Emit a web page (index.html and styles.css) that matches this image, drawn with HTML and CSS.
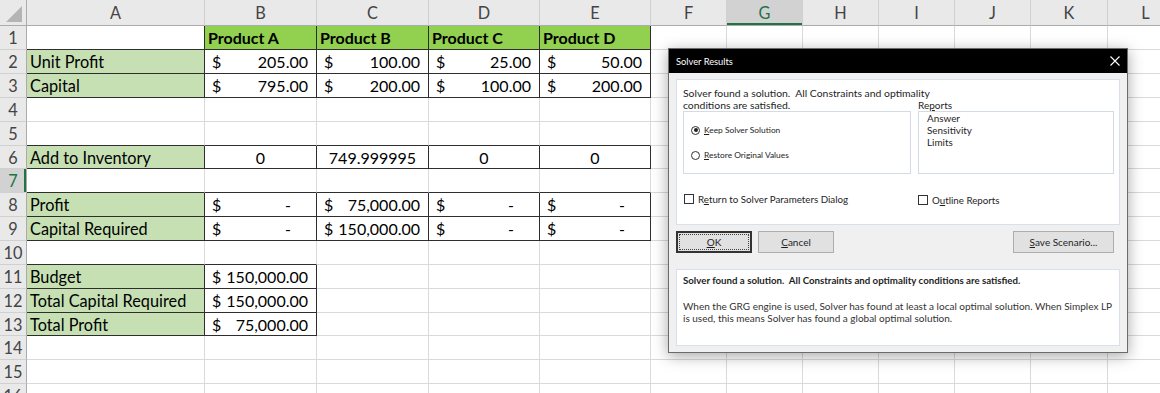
FILE: index.html
```html
<!DOCTYPE html>
<html lang="en">
<head>
    <meta charset="UTF-8">
    <title>Solver Results</title>
    <link rel="stylesheet" href="styles.css">
</head>
<body>
    <!-- Worksheet -->
    <div class="sheet">
        <div class="c hd corner">
            <svg width="26" height="25" viewBox="0 0 26 25"><polygon points="22,6 22,22 6,22" fill="#b4b4b4"/></svg>
        </div>
        <div class="c hd">A</div><div class="c hd">B</div><div class="c hd">C</div><div class="c hd">D</div><div class="c hd">E</div><div class="c hd">F</div><div class="c hd sel-col">G</div><div class="c hd">H</div><div class="c hd">I</div><div class="c hd">J</div><div class="c hd">K</div><div class="c hd">L</div>

        <!-- row 1 -->
        <div class="c rh">1</div>
        <div class="c bx"></div>
        <div class="c prod bx">Product A</div>
        <div class="c prod bx">Product B</div>
        <div class="c prod bx">Product C</div>
        <div class="c prod bx">Product D</div>
        <div class="c"></div><div class="c"></div><div class="c"></div><div class="c"></div><div class="c"></div><div class="c"></div><div class="c"></div>

        <!-- row 2 -->
        <div class="c rh">2</div>
        <div class="c lab bx">Unit Profit</div>
        <div class="c bx acct"><span>$</span><span>205.00</span></div>
        <div class="c bx acct"><span>$</span><span>100.00</span></div>
        <div class="c bx acct"><span>$</span><span>25.00</span></div>
        <div class="c bx acct"><span>$</span><span>50.00</span></div>
        <div class="c"></div><div class="c"></div><div class="c"></div><div class="c"></div><div class="c"></div><div class="c"></div><div class="c"></div>

        <!-- row 3 -->
        <div class="c rh">3</div>
        <div class="c lab bx">Capital</div>
        <div class="c bx acct"><span>$</span><span>795.00</span></div>
        <div class="c bx acct"><span>$</span><span>200.00</span></div>
        <div class="c bx acct"><span>$</span><span>100.00</span></div>
        <div class="c bx acct"><span>$</span><span>200.00</span></div>
        <div class="c"></div><div class="c"></div><div class="c"></div><div class="c"></div><div class="c"></div><div class="c"></div><div class="c"></div>

        <!-- row 4 -->
        <div class="c rh">4</div>
        <div class="c"></div><div class="c"></div><div class="c"></div><div class="c"></div><div class="c"></div>
        <div class="c"></div><div class="c"></div><div class="c"></div><div class="c"></div><div class="c"></div><div class="c"></div><div class="c"></div>

        <!-- row 5 -->
        <div class="c rh">5</div>
        <div class="c bt"></div><div class="c bt"></div><div class="c bt"></div><div class="c bt"></div><div class="c bt"></div>
        <div class="c"></div><div class="c"></div><div class="c"></div><div class="c"></div><div class="c"></div><div class="c"></div><div class="c"></div>

        <!-- row 6 -->
        <div class="c rh">6</div>
        <div class="c lab bx">Add to Inventory</div>
        <div class="c bx ctr">0</div>
        <div class="c bx ctr">749.999995</div>
        <div class="c bx ctr">0</div>
        <div class="c bx ctr">0</div>
        <div class="c"></div><div class="c"></div><div class="c"></div><div class="c"></div><div class="c"></div><div class="c"></div><div class="c"></div>

        <!-- row 7 -->
        <div class="c rh sel-row">7</div>
        <div class="c bt"></div><div class="c bt"></div><div class="c bt"></div><div class="c bt"></div><div class="c bt"></div>
        <div class="c"></div><div class="c"></div><div class="c"></div><div class="c"></div><div class="c"></div><div class="c"></div><div class="c"></div>

        <!-- row 8 -->
        <div class="c rh">8</div>
        <div class="c lab bx">Profit</div>
        <div class="c bx acct"><span>$</span><span class="dash">-</span></div>
        <div class="c bx acct"><span>$</span><span>75,000.00</span></div>
        <div class="c bx acct"><span>$</span><span class="dash">-</span></div>
        <div class="c bx acct"><span>$</span><span class="dash">-</span></div>
        <div class="c"></div><div class="c"></div><div class="c"></div><div class="c"></div><div class="c"></div><div class="c"></div><div class="c"></div>

        <!-- row 9 -->
        <div class="c rh">9</div>
        <div class="c lab bx">Capital Required</div>
        <div class="c bx acct"><span>$</span><span class="dash">-</span></div>
        <div class="c bx acct"><span>$</span><span>150,000.00</span></div>
        <div class="c bx acct"><span>$</span><span class="dash">-</span></div>
        <div class="c bx acct"><span>$</span><span class="dash">-</span></div>
        <div class="c"></div><div class="c"></div><div class="c"></div><div class="c"></div><div class="c"></div><div class="c"></div><div class="c"></div>

        <!-- row 10 -->
        <div class="c rh">10</div>
        <div class="c bt"></div><div class="c bt"></div><div class="c"></div><div class="c"></div><div class="c"></div>
        <div class="c"></div><div class="c"></div><div class="c"></div><div class="c"></div><div class="c"></div><div class="c"></div><div class="c"></div>

        <!-- row 11 -->
        <div class="c rh">11</div>
        <div class="c lab bx">Budget</div>
        <div class="c bx acct"><span>$</span><span>150,000.00</span></div>
        <div class="c"></div><div class="c"></div><div class="c"></div>
        <div class="c"></div><div class="c"></div><div class="c"></div><div class="c"></div><div class="c"></div><div class="c"></div><div class="c"></div>

        <!-- row 12 -->
        <div class="c rh">12</div>
        <div class="c lab bx">Total Capital Required</div>
        <div class="c bx acct"><span>$</span><span>150,000.00</span></div>
        <div class="c"></div><div class="c"></div><div class="c"></div>
        <div class="c"></div><div class="c"></div><div class="c"></div><div class="c"></div><div class="c"></div><div class="c"></div><div class="c"></div>

        <!-- row 13 -->
        <div class="c rh">13</div>
        <div class="c lab bx">Total Profit</div>
        <div class="c bx acct"><span>$</span><span>75,000.00</span></div>
        <div class="c"></div><div class="c"></div><div class="c"></div>
        <div class="c"></div><div class="c"></div><div class="c"></div><div class="c"></div><div class="c"></div><div class="c"></div><div class="c"></div>

        <!-- rows 14 - 16 -->
        <div class="c rh">14</div>
        <div class="c"></div><div class="c"></div><div class="c"></div><div class="c"></div><div class="c"></div>
        <div class="c"></div><div class="c"></div><div class="c"></div><div class="c"></div><div class="c"></div><div class="c"></div><div class="c"></div>

        <div class="c rh">15</div>
        <div class="c"></div><div class="c"></div><div class="c"></div><div class="c"></div><div class="c"></div>
        <div class="c"></div><div class="c"></div><div class="c"></div><div class="c"></div><div class="c"></div><div class="c"></div><div class="c"></div>

        <div class="c rh">16</div>
        <div class="c"></div><div class="c"></div><div class="c"></div><div class="c"></div><div class="c"></div>
        <div class="c"></div><div class="c"></div><div class="c"></div><div class="c"></div><div class="c"></div><div class="c"></div><div class="c"></div>
    </div>

    <!-- Solver Results dialog -->
    <div class="dialog">
        <div class="dialog-title">
            <span>Solver Results</span>
            <svg class="close" width="10" height="10" viewBox="0 0 10 10">
                <path d="M0.5 0.5L9.5 9.5M9.5 0.5L0.5 9.5" stroke="#fff" stroke-width="1.1"/>
            </svg>
        </div>

        <div class="dialog-body">
            <div class="panel">
                <div class="panel-grid">
                    <div>
                        <p class="msg">Solver found a solution.&nbsp; All Constraints and optimality<br>conditions are satisfied.</p>
                        <div class="group">
                            <label class="radio-row"><span class="radio checked"></span><span><u>K</u>eep Solver Solution</span></label>
                            <label class="radio-row"><span class="radio"></span><span><u>R</u>estore Original Values</span></label>
                        </div>
                    </div>
                    <div>
                        <p class="reports-label">Re<u>p</u>orts</p>
                        <ul class="list">
                            <li>Answer</li>
                            <li>Sensitivity</li>
                            <li>Limits</li>
                        </ul>
                    </div>
                </div>

                <div class="panel-grid checks">
                    <label class="check-row"><span class="check"></span><span>R<u>e</u>turn to Solver Parameters Dialog</span></label>
                    <label class="check-row outline"><span class="check"></span><span>O<u>u</u>tline Reports</span></label>
                </div>
            </div>

            <div class="buttons">
                <button class="btn btn-default"><span class="focus"><u>O</u>K</span></button>
                <button class="btn"><u>C</u>ancel</button>
                <button class="btn btn-save"><u>S</u>ave Scenario...</button>
            </div>

            <div class="panel panel-info">
                <p class="info-title">Solver found a solution.&nbsp; All Constraints and optimality conditions are satisfied.</p>
                <p class="info-text">When the GRG engine is used, Solver has found at least a local optimal solution. When Simplex LP<br>is used, this means Solver has found a global optimal solution.</p>
            </div>
        </div>
    </div>
</body>
</html>
```

FILE: styles.css
```css
* {
    margin: 0;
    padding: 0;
    box-sizing: border-box;
}

body {
    font-family: Lato, 'Liberation Sans', sans-serif;
    background: #fff;
    width: 1160px;
    height: 393px;
    overflow: hidden;
    position: relative;
}

/* Worksheet grid */
.sheet {
    display: grid;
    grid-template-columns: 27px 178px 112px 112px 111px 111px 76px 76px 76px 76px 76px 77px 76px;
    grid-template-rows: 26px repeat(5, 24px) 23px repeat(6, 24px) 23px repeat(3, 24px);
    font-size: 16.3px;
    color: #000;
}

.c {
    display: flex;
    align-items: center;
    padding: 0 3px;
    white-space: nowrap;
    border-right: 1px solid #dadada;
    border-bottom: 1px solid #dadada;
}

.hd {
    justify-content: center;
    background: #e9e9e9;
    color: #444;
    border-right-color: #d0d0d0;
    border-bottom-color: #ababab;
}

.corner {
    padding: 0;
    border-right-color: #ababab;
}

.rh {
    justify-content: center;
    padding: 0;
    background: #e9e9e9;
    color: #444;
    border-right-color: #ababab;
    border-bottom-color: #d0d0d0;
}

.sel-col {
    background: #d2d2d2;
    color: #217346;
    box-shadow: inset 0 -2px #217346;
}

.sel-row {
    background: #d2d2d2;
    color: #217346;
    box-shadow: inset -2px 0 #217346;
}

.lab {
    background: #c6e0b4;
}

.prod {
    background: #92d050;
    font-weight: 700;
    font-size: 16px;
}

.bx {
    border-right-color: #2e2e2e;
    border-bottom-color: #2e2e2e;
}

.bt {
    border-bottom-color: #2e2e2e;
}

.acct {
    justify-content: space-between;
    padding: 0 8px 0 7px;
    font-size: 16px;
}

.ctr {
    justify-content: center;
    font-size: 16px;
}

.dash {
    margin-right: 17px;
}

/* Dialog */
.dialog {
    position: absolute;
    left: 668px;
    top: 48px;
    width: 460px;
    background: #f0f0f0;
    border: 1px solid #6b6b6b;
    box-shadow: 0 3px 14px rgba(0, 0, 0, 0.35);
    color: #1e1e1e;
    font-size: 10px;
}

.dialog-title {
    height: 24px;
    display: flex;
    align-items: center;
    justify-content: space-between;
    padding: 0 7px;
    background: #000;
    color: #fff;
    font-size: 9.3px;
}

.dialog-body {
    padding: 6px 7px;
}

.panel {
    background: #fff;
    border: 1px solid #d8e0e9;
    height: 146px;
    padding: 7px 6px 0;
}

.panel-grid {
    display: grid;
    grid-template-columns: 228px 196px;
    column-gap: 7px;
}

.msg {
    font-size: 10.4px;
    line-height: 12px;
    white-space: nowrap;
}

.group,
.list {
    border: 1px solid #d3dbe4;
    height: 63px;
}

.group {
    display: flex;
    flex-direction: column;
    justify-content: center;
    gap: 13px;
    padding-left: 7px;
}

.radio-row,
.check-row {
    display: flex;
    align-items: center;
    gap: 4px;
    line-height: 12px;
}

.radio-row {
    font-size: 8.4px;
}

.radio {
    width: 9px;
    height: 9px;
    border: 1px solid #333;
    border-radius: 50%;
    display: flex;
    align-items: center;
    justify-content: center;
}

.radio.checked::after {
    content: "";
    width: 4px;
    height: 4px;
    border-radius: 50%;
    background: #222;
}

.reports-label {
    line-height: 12px;
    margin-top: 12px;
}

.list {
    list-style: none;
    padding: 0 8px;
    line-height: 12px;
    font-size: 9.9px;
}

.checks {
    margin-top: 18px;
}

.check-row {
    font-size: 9.75px;
    margin-left: 1px;
}

.check-row.outline {
    margin-left: 0;
    margin-top: 2px;
}

.check {
    width: 10px;
    height: 10px;
    border: 1px solid #333;
    background: #fff;
}

.buttons {
    display: flex;
    gap: 6px;
    margin-top: 6px;
}

.btn {
    width: 76px;
    height: 22px;
    display: flex;
    align-items: center;
    justify-content: center;
    background: #e1e1e1;
    border: 1px solid #adadad;
    font-family: inherit;
    font-size: 10px;
    color: #1e1e1e;
}

.btn-default {
    border: 2px solid #333;
    padding: 1px;
}

.btn-default .focus {
    flex: 1;
    align-self: stretch;
    display: flex;
    align-items: center;
    justify-content: center;
    border: 1px dotted #444;
}

.btn-save {
    width: 101px;
    margin-left: auto;
    margin-right: 6px;
}

.panel-info {
    height: 77px;
    margin-top: 16px;
    padding: 4px 6px 0;
}

.info-title {
    font-weight: 700;
    font-size: 9.7px;
    line-height: 12px;
}

.info-text {
    margin-top: 14px;
    line-height: 12px;
    color: #333;
    font-size: 10px;
}
```
